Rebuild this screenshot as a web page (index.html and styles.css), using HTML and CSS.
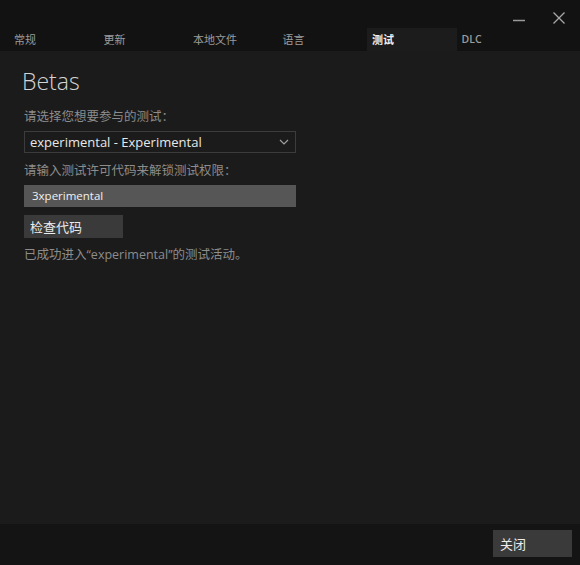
FILE: index.html
```html
<!DOCTYPE html>
<html>
<head>
<meta charset="utf-8">
<link rel="stylesheet" href="styles.css">
</head>
<body>
<div class="window">
  <div class="titlebar">
    <div class="ctl min"><svg width="14" height="14" viewBox="0 0 14 14"><path d="M1 9.5H13" stroke="#9a9a9a" stroke-width="1.5"/></svg></div>
    <div class="ctl close"><svg width="14" height="14" viewBox="0 0 14 14"><path d="M1.5 1.5L12.5 12.5M12.5 1.5L1.5 12.5" stroke="#a8a8a8" stroke-width="1.3"/></svg></div>
  </div>
  <div class="tabs">
    <div class="tab">常规</div>
    <div class="tab">更新</div>
    <div class="tab">本地文件</div>
    <div class="tab">语言</div>
    <div class="tab active">测试</div>
    <div class="tab">DLC</div>
  </div>
  <div class="content">
    <h1 class="heading">Betas</h1>
    <div class="label">请选择您想要参与的测试：</div>
    <div class="select">
      <span>experimental - Experimental</span>
      <svg width="10" height="6" viewBox="0 0 10 6"><path d="M1 1L5 5L9 1" stroke="#a0a0a0" stroke-width="1.2" fill="none"/></svg>
    </div>
    <div class="label label2">请输入测试许可代码来解锁测试权限：</div>
    <div class="input">3xperimental</div>
    <div class="btn check">检查代码</div>
    <div class="label status">已成功进入<span class="latin">“experimental”</span>的测试活动。</div>
  </div>
  <div class="footer">
    <div class="btn closebtn">关闭</div>
  </div>
</div>
</body>
</html>
```

FILE: styles.css
```css
html, body {
  margin: 0;
  padding: 0;
}
body {
  background: #121212;
  font-family: "Open Sans", "Noto Sans CJK SC", sans-serif;
  font-size: 13px;
  color: #d8d8d8;
}
.window {
  width: 580px;
  height: 565px;
  display: flex;
  flex-direction: column;
}
.titlebar {
  height: 28px;
  display: flex;
  justify-content: flex-end;
  align-items: flex-start;
  padding-right: 14px;
  box-sizing: border-box;
}
.ctl {
  width: 14px;
  height: 14px;
  margin-top: 11px;
}
.ctl.min {
  margin-right: 26px;
}
.tabs {
  height: 23px;
  display: flex;
  padding-left: 9px;
}
.tab {
  width: 89.5px;
  box-sizing: border-box;
  padding-left: 5px;
  font-size: 11px;
  line-height: 22px;
  color: #9c9c9c;
  font-family: "Noto Sans CJK SC", sans-serif;
}
.tab:last-child {
  font-family: "Open Sans", sans-serif;
  font-weight: 600;
  font-size: 10.5px;
}
.tab.active {
  background: #1c1c1c;
  color: #f0f0f0;
  font-weight: 700;
}
.content {
  flex: 1;
  background: #1b1b1b;
  padding: 0 24px;
}
.heading {
  margin: 10px 0 0 -2px;
  font-family: "Open Sans", sans-serif;
  font-weight: 300;
  font-size: 23px;
  line-height: 40px;
  color: #d4d4d4;
}
.label {
  font-family: "Noto Sans CJK SC", sans-serif;
  font-size: 12.5px;
  line-height: 18px;
  color: #8c8c8c;
  margin-top: 6px;
}
.latin {
  font-family: "Open Sans", sans-serif;
  font-size: 12.5px;
}
.select {
  margin-top: 6px;
  width: 272px;
  height: 22px;
  box-sizing: border-box;
  border: 1px solid #3c3c3c;
  display: flex;
  align-items: center;
  justify-content: space-between;
  padding: 0 6px 0 5px;
  color: #e8e8e8;
  font-size: 13px;
}
.label2 {
  margin-top: 8px;
}
.input {
  margin-top: 6px;
  width: 272px;
  height: 22px;
  box-sizing: border-box;
  background: #565656;
  padding-left: 8px;
  line-height: 22px;
  color: #f0f0f0;
  font-size: 11.5px;
}
.btn {
  background: #3a3a3a;
  color: #ececec;
  font-family: "Noto Sans CJK SC", sans-serif;
  font-size: 13px;
  box-sizing: border-box;
  padding-left: 6px;
}
.check {
  margin-top: 8px;
  width: 99px;
  height: 23px;
  line-height: 23px;
}
.status {
  margin-top: 7px;
}
.footer {
  height: 41px;
  background: #141414;
  display: flex;
  justify-content: flex-end;
  align-items: flex-start;
  padding-right: 8px;
}
.closebtn {
  margin-top: 6px;
  width: 79px;
  height: 27px;
  line-height: 27px;
  padding-left: 7px;
}
```
